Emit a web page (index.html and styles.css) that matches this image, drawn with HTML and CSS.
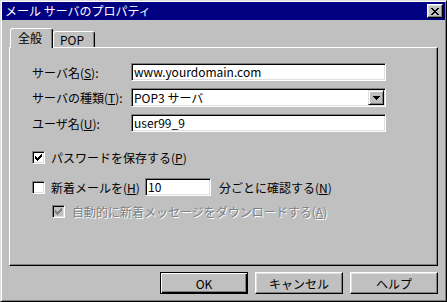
FILE: index.html
```html
<!DOCTYPE html>
<html lang="ja">
<head>
    <meta charset="UTF-8">
    <title>メール サーバのプロパティ</title>
    <link rel="stylesheet" href="styles.css">
</head>
<body>
    <div class="window">
        <div class="titlebar">
            <span class="title">メール サーバのプロパティ</span>
            <span class="close">
                <svg width="8" height="7" viewBox="0 0 8 7"><path d="M0 0h2v1h-2z M6 0h2v1h-2z M1 1h2v1h-2z M5 1h2v1h-2z M2 2h4v1h-4z M3 3h2v1h-2z M2 4h4v1h-4z M1 5h2v1h-2z M5 5h2v1h-2z M0 6h2v1h-2z M6 6h2v1h-2z" fill="#000"/></svg>
            </span>
        </div>

        <div class="content">
            <div class="tabs">
                <div class="tab active">全般</div>
                <div class="tab">POP</div>
            </div>

            <div class="panel">
                <div class="fields">
                    <span class="label">サーバ名(<u>S</u>):</span>
                    <div class="input">www.yourdomain.com</div>

                    <span class="label">サーバの種類(<u>T</u>):</span>
                    <div class="input select">
                        <span class="value">POP3 サーバ</span>
                        <span class="drop">
                            <svg width="7" height="4" viewBox="0 0 7 4"><path d="M0 0h7v1h-7z M1 1h5v1h-5z M2 2h3v1h-3z M3 3h1v1h-1z" fill="#000"/></svg>
                        </span>
                    </div>

                    <span class="label">ユーザ名(<u>U</u>):</span>
                    <div class="input">user99_9</div>
                </div>

                <div class="checks">
                    <div class="check-row first">
                        <span class="checkbox">
                            <svg width="9" height="9" viewBox="0 0 9 9"><path d="M7 1h1v3h-1z M6 2h1v3h-1z M5 3h1v3h-1z M4 4h1v3h-1z M3 5h1v3h-1z M2 4h1v3h-1z M1 3h1v3h-1z" fill="#000"/></svg>
                        </span>
                        <span>パスワードを保存する(<u>P</u>)</span>
                    </div>

                    <div class="check-row">
                        <span class="checkbox"></span>
                        <span class="interval-label">新着メールを(<u>H</u>)</span>
                        <div class="input small">10</div>
                        <span>分ごとに確認する(<u>N</u>)</span>
                    </div>

                    <div class="check-row sub disabled">
                        <span class="checkbox">
                            <svg width="9" height="9" viewBox="0 0 9 9"><path d="M7 1h1v3h-1z M6 2h1v3h-1z M5 3h1v3h-1z M4 4h1v3h-1z M3 5h1v3h-1z M2 4h1v3h-1z M1 3h1v3h-1z" fill="#808080"/></svg>
                        </span>
                        <span class="dim-text">自動的に新着メッセージをダウンロードする(<u>A</u>)</span>
                    </div>
                </div>
            </div>

            <div class="buttons">
                <button class="btn default">OK</button>
                <button class="btn">キャンセル</button>
                <button class="btn">ヘルプ</button>
            </div>
        </div>
    </div>
</body>
</html>
```

FILE: styles.css
```css
* {
    box-sizing: border-box;
}

body {
    margin: 0;
    background-color: #c0c0c0;
    font-family: "Noto Sans CJK JP", sans-serif;
    font-size: 12px;
    color: #000;
}

.window {
    width: 447px;
    height: 302px;
    padding: 1px;
    border: 1px solid;
    border-color: #dfdfdf #000 #000 #dfdfdf;
    box-shadow: inset 1px 1px #fff, inset -1px -1px #808080;
    display: flex;
    flex-direction: column;
}

.titlebar {
    height: 18px;
    background-color: #000080;
    color: #fff;
    display: flex;
    align-items: center;
    justify-content: space-between;
    padding: 0 2px 0 3px;
    line-height: 18px;
}

.close {
    width: 16px;
    height: 14px;
    background-color: #c0c0c0;
    border: 1px solid;
    border-color: #fff #000 #000 #fff;
    box-shadow: inset -1px -1px #808080, inset 1px 1px #dfdfdf;
    display: flex;
    align-items: center;
    justify-content: center;
}

.close svg,
.drop svg,
.checkbox svg {
    display: block;
}

.content {
    flex: 1;
    padding: 8px 7px 0 7px;
    display: flex;
    flex-direction: column;
}

/* onglets */
.tabs {
    display: flex;
    align-items: flex-end;
    height: 19px;
    padding-left: 1px;
}

.tab {
    width: 42px;
    height: 16px;
    padding-left: 6px;
    line-height: 15px;
    background-color: #c0c0c0;
    border: 1px solid;
    border-bottom: none;
    border-color: #fff #000 transparent #fff;
    box-shadow: inset -1px 0 #808080;
    border-radius: 3px 3px 0 0;
}

.tab.active {
    position: relative;
    z-index: 1;
    width: 43px;
    height: 20px;
    margin-bottom: -1px;
    padding-left: 7px;
    line-height: 18px;
}

.panel {
    height: 219px;
    border: 1px solid;
    border-color: #fff #000 #000 #fff;
    box-shadow: inset -1px -1px #808080;
    padding: 15px 0 0 22px;
}

.fields {
    display: grid;
    grid-template-columns: 99px 255px;
    row-gap: 7px;
    align-items: center;
}

.input {
    height: 18px;
    background-color: #fff;
    border: 1px solid;
    border-color: #808080 #fff #fff #808080;
    box-shadow: inset 1px 1px #000, inset -1px -1px #dfdfdf;
    padding: 0 2px;
    line-height: 16px;
    white-space: nowrap;
}

.select {
    height: 19px;
    padding: 1px;
    display: flex;
    align-items: stretch;
}

.select .value {
    flex: 1;
    padding-left: 1px;
    line-height: 15px;
}

.drop {
    width: 16px;
    background-color: #c0c0c0;
    border: 1px solid;
    border-color: #dfdfdf #000 #000 #dfdfdf;
    box-shadow: inset 1px 1px #fff, inset -1px -1px #808080;
    display: flex;
    align-items: center;
    justify-content: center;
}

/* cases à cocher */
.checks {
    margin-top: 16px;
    display: flex;
    flex-direction: column;
    gap: 6px;
}

.check-row {
    height: 18px;
    display: flex;
    align-items: center;
}

.check-row.first {
    margin-bottom: 6px;
}

.check-row.sub {
    padding-left: 20px;
}

.checkbox {
    width: 13px;
    height: 13px;
    margin-right: 6px;
    background-color: #fff;
    border: 1px solid;
    border-color: #808080 #fff #fff #808080;
    box-shadow: inset 1px 1px #000, inset -1px -1px #dfdfdf;
    display: flex;
    align-items: center;
    justify-content: center;
}

.disabled .checkbox {
    background-color: #c0c0c0;
    margin-right: 7px;
}

.interval-label {
    width: 94px;
}

.input.small {
    width: 66px;
    margin-right: 8px;
}

.dim-text {
    color: #808080;
    text-shadow: 1px 1px #fff;
}

/* boutons */
.buttons {
    margin-top: 6px;
    display: flex;
    justify-content: flex-end;
    gap: 7px;
}

.btn {
    width: 88px;
    height: 22px;
    padding: 0;
    font-family: inherit;
    font-size: 12px;
    color: #000;
    background-color: #c0c0c0;
    border: 1px solid;
    border-color: #fff #000 #000 #fff;
    box-shadow: inset -1px -1px #808080, inset 1px 1px #dfdfdf;
}

.btn.default {
    border-color: #000;
    box-shadow: inset 1px 1px #fff, inset -1px -1px #000, inset -2px -2px #808080;
}
```
